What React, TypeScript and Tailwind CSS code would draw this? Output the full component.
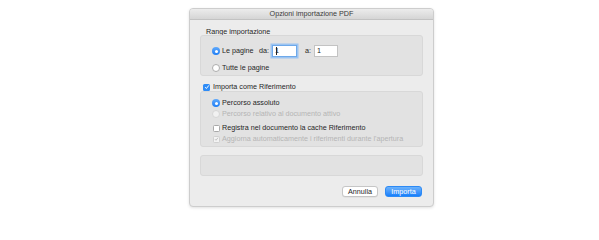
import React from 'react';

type Mark = 'on' | 'off' | 'disabled';

function Radio({ state }: { state: Mark }) {
  if (state === 'on') {
    return (
      <span className="w-[8px] h-[8px] rounded-full bg-gradient-to-b from-[#5fa9fb] to-[#1c7ef5] flex items-center justify-center">
        <span className="w-[3px] h-[3px] rounded-full bg-white" />
      </span>
    );
  }
  return (
    <span
      className={
        state === 'disabled'
          ? 'w-[8px] h-[8px] rounded-full bg-[#f1f1f1] border border-[#d6d6d6]'
          : 'w-[8px] h-[8px] rounded-full bg-white border border-[#adadad]'
      }
    />
  );
}

function Check({ state }: { state: Mark }) {
  if (state === 'on') {
    return (
      <span className="w-[7px] h-[7px] rounded-[1.5px] bg-[#2f8cf6] flex items-center justify-center">
        <svg viewBox="0 0 8 8" className="w-[6px] h-[6px]">
          <path d="M1.5 4.2 L3.2 6 L6.5 1.8" fill="none" stroke="#fff" strokeWidth="1.3" />
        </svg>
      </span>
    );
  }
  if (state === 'disabled') {
    return (
      <span className="w-[7px] h-[7px] rounded-[1.5px] bg-[#f3f3f3] border border-[#d0d0d0] flex items-center justify-center">
        <svg viewBox="0 0 8 8" className="w-[6px] h-[6px]">
          <path d="M1.5 4.2 L3.2 6 L6.5 1.8" fill="none" stroke="#a9a9a9" strokeWidth="1.1" />
        </svg>
      </span>
    );
  }
  return <span className="w-[7px] h-[7px] rounded-[1.5px] bg-white border border-[#a9a9a9]" />;
}

function Option({ kind, state, label, className = '' }: { kind: 'radio' | 'check'; state: Mark; label: string; className?: string }) {
  return (
    <div className={`flex items-center h-[10px] whitespace-nowrap ${className}`}>
      <span className="w-[8px] shrink-0 flex justify-center">
        {kind === 'radio' ? <Radio state={state} /> : <Check state={state} />}
      </span>
      <span className={`ml-[2px] leading-[10px] ${state === 'disabled' ? 'text-[#b5b5b5]' : 'text-[#262626]'}`}>{label}</span>
    </div>
  );
}

export default function App() {
  return (
    <div
      className="w-[599px] h-[220px] bg-white pl-[189px] pt-[8px] text-[7.2px] text-[#262626]"
      style={{ fontFamily: '"Liberation Sans", Arial, sans-serif' }}
    >
      <div className="w-[245px] h-[199px] flex flex-col bg-[#ececec] border border-[#cdcdcd] rounded-[4px] shadow-[0_1px_3px_rgba(0,0,0,0.12)] overflow-hidden">
        <div className="h-[11px] shrink-0 bg-gradient-to-b from-[#ececec] to-[#d5d5d5] border-b border-[#c2c2c2] text-center leading-[10px] text-[#3a3a3a]">
          Opzioni importazione PDF
        </div>

        <div className="flex flex-col px-[10px] pt-[8px]">
          <div className="h-[7px] leading-[7px] pl-[6px]">Range importazione</div>

          <div className="h-[41px] bg-[#e2e2e2] border border-[#d8d8d8] rounded-[3px] pl-[11px] pt-[9px] flex flex-col">
            <div className="flex items-center h-[12px] whitespace-nowrap">
              <span className="w-[8px] shrink-0 flex justify-center">
                <Radio state="on" />
              </span>
              <span className="ml-[2px] w-[32px] shrink-0">Le pagine</span>
              <span className="ml-[5px] w-[13px] shrink-0">da:</span>
              <div className="w-[25px] h-[12px] shrink-0 bg-white border border-[#6ea9ea] shadow-[0_0_0_1.5px_#9cc4f1] flex items-center pl-[2px] leading-[10px]">
                1<span className="w-[1px] h-[8px] bg-[#222] -ml-[3px]" />
              </div>
              <span className="ml-[8px] w-[9px] shrink-0">a:</span>
              <div className="w-[24px] h-[12px] shrink-0 bg-white border border-[#c3c3c3] flex items-center pl-[2px] leading-[10px]">
                1
              </div>
            </div>
            <div className="flex items-center h-[12px] mt-[5px] whitespace-nowrap">
              <span className="w-[8px] shrink-0 flex justify-center">
                <Radio state="off" />
              </span>
              <span className="ml-[2px]">Tutte le pagine</span>
            </div>
          </div>

          <div className="flex items-center h-[8px] mt-[7px] pl-[3px] whitespace-nowrap">
            <Check state="on" />
            <span className="ml-[3px] leading-[8px]">Importa come Riferimento</span>
          </div>

          <div className="h-[56px] bg-[#e2e2e2] border border-[#d8d8d8] rounded-[3px] pl-[11px] pt-[6px] flex flex-col">
            <Option kind="radio" state="on" label="Percorso assoluto" />
            <Option kind="radio" state="disabled" label="Percorso relativo al documento attivo" className="mt-[1px]" />
            <Option kind="check" state="off" label="Registra nel documento la cache Riferimento" className="mt-[4px]" />
            <Option kind="check" state="disabled" label="Aggiorna automaticamente i riferimenti durante l'apertura" className="mt-[1px]" />
          </div>

          <div className="h-[21px] mt-[8px] bg-[#e2e2e2] border border-[#d8d8d8] rounded-[3px]" />

          <div className="flex justify-end gap-[7px] mt-[10px] pr-[1px]">
            <button className="w-[36px] h-[11px] bg-white border border-[#c6c6c6] rounded-[3px] leading-[9px] text-[#262626] shadow-[0_0.5px_0.5px_rgba(0,0,0,0.08)]">
              Annulla
            </button>
            <button className="w-[37px] h-[11px] bg-gradient-to-b from-[#6bb2fb] to-[#137ffb] border border-[#2d8af5] rounded-[3px] leading-[9px] text-white">
              Importa
            </button>
          </div>
        </div>
      </div>
    </div>
  );
}
